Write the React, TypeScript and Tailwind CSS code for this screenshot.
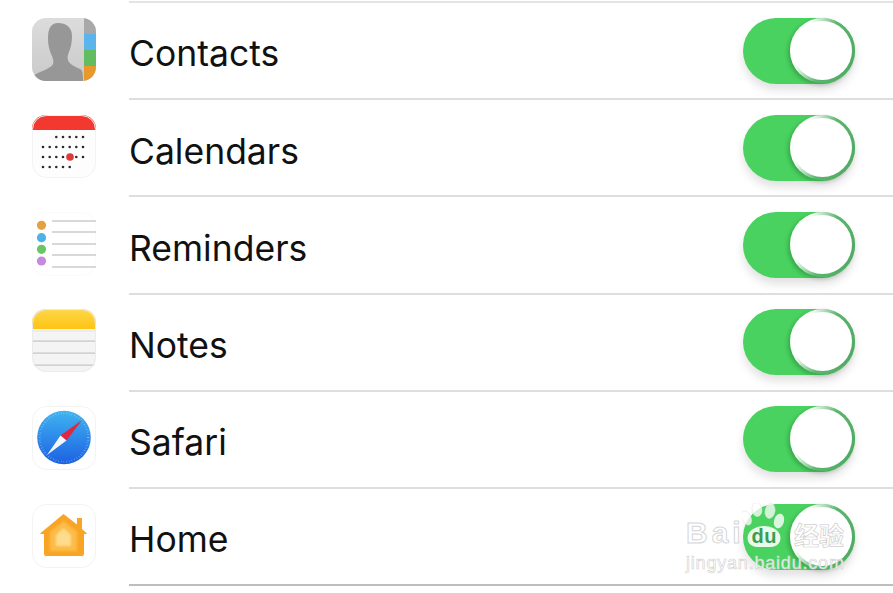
import React from "react";

const ContactsIcon = () => (
  <svg viewBox="0 0 64 64" className="h-16 w-16">
    <defs>
      <clipPath id="cc"><rect width="64" height="63" rx="14" /></clipPath>
      <filter id="b1" x="-10%" y="-10%" width="120%" height="120%"><feGaussianBlur stdDeviation="0.5" /></filter>
      <linearGradient id="cg" x1="0" y1="0" x2="0" y2="1">
        <stop offset="0" stopColor="#dcdcdc" />
        <stop offset="1" stopColor="#c9c9c9" />
      </linearGradient>
    </defs>
    <g clipPath="url(#cc)">
      <rect width="64" height="64" fill="url(#cg)" />
      <path filter="url(#b1)" d="M26 5c8 0 14 4 14 13 0 6-1 11-3 16-1 3-2 5-1 8 1 4 6 6 12 9 2 1 3 2 3 13H0c0-5 2-7 6-9 6-3 13-5 15-9 1-3 0-6-2-10-2-5-3-10-3-15C16 10 19 5 26 5z" fill="#979797" />
      <rect x="52" y="0" width="12" height="16" fill="#a8a8a8" />
      <rect x="52" y="16" width="12" height="16" fill="#5cb5ea" />
      <rect x="52" y="32" width="12" height="16" fill="#63bd60" />
      <rect x="52" y="48" width="12" height="16" fill="#e9982c" />
    </g>
  </svg>
);

const CalendarIcon = () => {
  const c = [11, 17.7, 24.3, 31, 37.7, 44.3, 51];
  const rows: [number, number[]][] = [
    [22, c.slice(2)],
    [32, c],
    [42, [...c.slice(0, 4), ...c.slice(5)]],
    [52, c.slice(0, 5)],
  ];
  return (
    <svg viewBox="0 0 64 64" className="h-16 w-16">
      <defs><clipPath id="cal"><rect width="64" height="63" rx="14" /></clipPath></defs>
      <g clipPath="url(#cal)">
        <rect width="64" height="64" fill="#fdfdfd" />
        <rect width="64" height="15" fill="#f2382f" />
      </g>
      <rect x="0.5" y="0.5" width="63" height="62" rx="14" fill="none" stroke="#f3f3f3" />
      {rows.map(([y, xs]) => xs.map((x) => <circle key={`${x}-${y}`} cx={x} cy={y} r="1.3" fill="#2c2c2c" />))}
      <circle cx="38" cy="42" r="3.8" fill="#dd3a3c" />
    </svg>
  );
};

const RemindersIcon = () => (
  <svg viewBox="0 0 64 64" className="h-16 w-16">
    <rect x="0.5" y="0.5" width="63" height="63" rx="14" fill="#fff" stroke="#fafafa" />
    {[9, 20, 32, 43, 55].map((y) => (
      <rect key={y} x="20" y={y - 0.7} width="44" height="1.4" fill="#c8c8c8" />
    ))}
    <circle cx="9.500" cy="13.300" r="4.600" fill="#e3a13f" />
    <circle cx="9.500" cy="25.700" r="4.600" fill="#4db2e6" />
    <circle cx="9.500" cy="37.300" r="4.600" fill="#6cc565" />
    <circle cx="9.500" cy="49" r="4.600" fill="#c58ae0" />
  </svg>
);

const NotesIcon = () => (
  <svg viewBox="0 0 64 64" className="h-16 w-16">
    <defs>
      <clipPath id="nt"><rect width="64" height="63" rx="14" /></clipPath>
      <linearGradient id="ny" x1="0" y1="0" x2="0" y2="1">
        <stop offset="0" stopColor="#fdd84a" />
        <stop offset="1" stopColor="#fdc414" />
      </linearGradient>
    </defs>
    <g clipPath="url(#nt)">
      <rect width="64" height="64" fill="#f4f4f4" />
      <rect width="64" height="20" fill="url(#ny)" />
      <rect y="21.500" width="64" height="1" fill="#e4e4e4" />
      <rect y="31.500" width="64" height="1.200" fill="#c4c4c4" />
      <rect y="43.500" width="64" height="1.200" fill="#c4c4c4" />
      <rect y="55.500" width="64" height="1.200" fill="#c4c4c4" />
    </g>
    <rect x="0.500" y="0.500" width="63" height="62" rx="14" fill="none" stroke="#ebebeb" />
  </svg>
);

const SafariIcon = () => (
  <svg viewBox="0 0 64 64" className="h-16 w-16">
    <defs>
      <linearGradient id="sf" x1="0" y1="0" x2="0" y2="1">
        <stop offset="0" stopColor="#3fb4f0" />
        <stop offset="1" stopColor="#1c60e2" />
      </linearGradient>
    </defs>
    <rect x="0.500" y="0.500" width="63" height="63" rx="14" fill="#fff" stroke="#f3f3f3" />
    <circle cx="32" cy="31.500" r="26.800" fill="url(#sf)" />
    <circle cx="32" cy="31.500" r="24.300" fill="none" stroke="#d6eafb" strokeWidth="2" strokeDasharray="0.5 2.2" opacity="0.55" />
    <polygon points="50,14 34.500,34.500 28.500,29.500" fill="#e2263d" />
    <polygon points="15,49 34.500,34.500 28.500,29.500" fill="#f4f6fb" />
  </svg>
);

const HomeIcon = () => (
  <svg viewBox="0 0 64 64" className="h-16 w-16">
    <defs>
      <filter id="hb" x="-10%" y="-10%" width="120%" height="120%"><feGaussianBlur stdDeviation="1.200" /></filter>
    </defs>
    <rect x="0.500" y="0.500" width="63" height="63" rx="14" fill="#fff" stroke="#f3f3f3" />
    <path d="M31.500 10 45 20.500V14h5v11l5 4.500-1 .5h-2v20a2 2 0 0 1-2 2H14a2 2 0 0 1-2-2V30H9l-1-.5z" fill="#f8a526" />
    <path filter="url(#hb)" d="M31.500 17 45 28v19H18V28z" fill="#fcbc4a" />
    <path filter="url(#hb)" d="M31.500 24 39 31v11H24V31z" fill="#fddc8c" />
  </svg>
);

const Toggle = () => (
  <div className="flex h-[66px] w-[112px] justify-end rounded-full bg-[#49d25f] shadow-[0_6px_10px_rgba(0,0,0,0.12)]">
    <div className="flex h-[65px] w-[65px] items-center justify-center rounded-full bg-[linear-gradient(110deg,#ffffff_25%,#5cb56e_55%,#4fa562)] shadow-[-2px_2px_4px_rgba(0,0,0,0.22)]">
      <div className="h-[59px] w-[59px] rounded-full bg-white" />
    </div>
  </div>
);

const items: [string, React.FC][] = [
  ["Contacts", ContactsIcon],
  ["Calendars", CalendarIcon],
  ["Reminders", RemindersIcon],
  ["Notes", NotesIcon],
  ["Safari", SafariIcon],
  ["Home", HomeIcon],
];

const Watermark = () => (
  <div className="absolute left-[686px] top-[503px] flex w-[170px] flex-col font-['Liberation_Sans',sans-serif]">
    <div className="flex h-[45px] items-end">
      <span className="w-[56px] whitespace-nowrap text-[30px] font-bold leading-[30px] tracking-[4px] text-white/90 [-webkit-text-stroke:1px_#d6d6d6]">Bai</span>
      <svg viewBox="0 0 44 45" className="h-[45px] w-[44px] shrink-0">
        <ellipse cx="4.500" cy="15" rx="4.500" ry="7.500" transform="rotate(-25 4.500 15)" fill="#fff" fillOpacity="0.75" stroke="#ddd" strokeWidth="0.5" />
        <ellipse cx="15" cy="6.500" rx="5" ry="7" transform="rotate(-8 15 6.500)" fill="#fff" fillOpacity="0.75" stroke="#ddd" strokeWidth="0.5" />
        <ellipse cx="28" cy="8" rx="5" ry="7.500" transform="rotate(10 28 8)" fill="#fff" fillOpacity="0.75" stroke="#ddd" strokeWidth="0.5" />
        <ellipse cx="37" cy="18" rx="5" ry="7.500" transform="rotate(15 37 18)" fill="#fff" fillOpacity="0.8" />
        <path d="M22 23c6 0 14 3 16 9 2 7-3 12-9 12H15C9 44 4 39 6 32c2-6 10-9 16-9z" fill="#fff" fillOpacity="0.88" />
        <text x="9.500" y="40" fontFamily="Liberation Sans, sans-serif" fontWeight="700" fontSize="20" letterSpacing="0.500" fill="#3a9d52">du</text>
      </svg>
      <span className="ml-[8px] font-['Noto_Sans_CJK_SC',sans-serif] text-[25px] font-bold leading-[28px] text-white/90 [-webkit-text-stroke:0.7px_#cfcfcf]">经验</span>
    </div>
    <span className="mt-[3px] text-[18px] leading-[24px] tracking-[0.8px] text-white/85 [-webkit-text-stroke:0.6px_#d0d0d0]">jingyan.baidu.com</span>
  </div>
);

export default function App() {
  return (
    <div className="relative h-[593px] w-[893px] overflow-hidden bg-white font-['Inter',sans-serif] text-[#111]">
      <div className="ml-[129px] h-[3px] border-b-2 border-[#e4e4e4]" />
      {items.map(([name, Icon], i) => (
        <div key={name} className="flex h-[97.2px] items-center pl-[32px]">
          <div className="pb-[4px]">
            <Icon />
          </div>
          <div className={`ml-[33px] flex h-full flex-1 items-center justify-between border-b-2 pr-[38px] ${i === 5 ? "border-[#bdbdbd]" : "border-[#dedede]"}`}>
            <span className="pt-[7px] text-[35.5px] leading-none">{name}</span>
            <Toggle />
          </div>
        </div>
      ))}
      <Watermark />
    </div>
  );
}
